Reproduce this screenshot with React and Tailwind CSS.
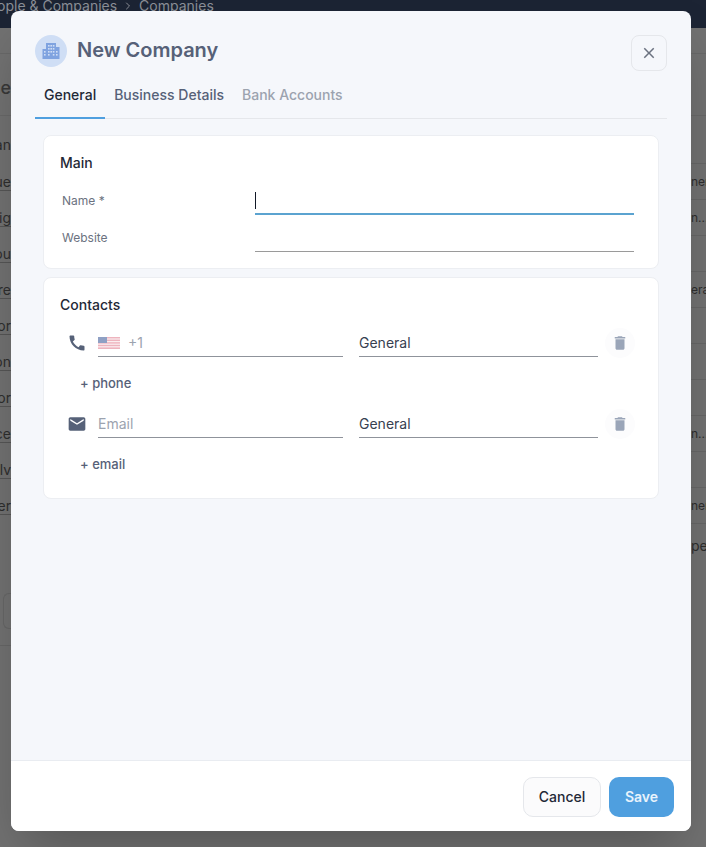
import { MdCall, MdEmail, MdDelete, MdClose } from "react-icons/md";
import { ChevronRight } from "lucide-react";

const leftBits = ["an", "ue", "ig", "ou", "re", "or", "on", "or", "ce", "lv", "er"];
const rightBits = ["", "ner", "n...", "", "eral", "", "", "", "n...", "", "ner"];

function BuildingIcon() {
  return (
    <svg width="18" height="18" viewBox="0 0 18 18">
      <path fill="#7fa3e0" d="M4 1h10v4h3.5v12H.5V7H4z" />
      <g fill="#cfdef5">
        <rect x="6" y="3" width="1.6" height="1.6" />
        <rect x="8.4" y="3" width="1.6" height="1.6" />
        <rect x="10.8" y="3" width="1.6" height="1.6" />
        <rect x="6" y="6" width="1.6" height="1.6" />
        <rect x="8.4" y="6" width="1.6" height="1.6" />
        <rect x="10.8" y="6" width="1.6" height="1.6" />
        <rect x="2" y="9" width="1.6" height="1.6" />
        <rect x="6" y="9" width="1.6" height="1.6" />
        <rect x="8.4" y="9" width="1.6" height="1.6" />
        <rect x="10.8" y="9" width="1.6" height="1.6" />
        <rect x="14" y="9" width="1.6" height="1.6" />
        <rect x="2" y="12" width="1.6" height="1.6" />
        <rect x="6" y="12" width="1.6" height="1.6" />
        <rect x="10.8" y="12" width="1.6" height="1.6" />
        <rect x="14" y="12" width="1.6" height="1.6" />
      </g>
    </svg>
  );
}

function UsFlag() {
  return (
    <svg width="22" height="12" viewBox="0 0 22 12" className="shrink-0">
      <rect width="22" height="12" fill="#fbeef0" />
      <rect y="0" width="22" height="1.4" fill="#eeb4be" />
      <rect y="2.6" width="22" height="1.4" fill="#eeb4be" />
      <rect y="5.2" width="22" height="1.4" fill="#eeb4be" />
      <rect y="7.8" width="22" height="1.4" fill="#eeb4be" />
      <rect y="10.4" width="22" height="1.6" fill="#eeb4be" />
      <rect width="9" height="6" fill="#8fa0c4" />
    </svg>
  );
}

function Field({ label, focused }) {
  return (
    <div className="flex items-end h-[37px]">
      <div className="w-[195px] pl-[2px] pb-[6px] text-xs text-[#6b7280]">{label}</div>
      <div
        className={
          focused
            ? "w-[379px] h-[28px] border-b-2 border-[#5ba3d0] flex items-center"
            : "w-[379px] h-[28px] border-b border-[#9a9a9a]"
        }
      >
        {focused && <div className="w-px h-[17px] bg-[#111827]" />}
      </div>
    </div>
  );
}

function ContactRow({ icon, children }) {
  return (
    <div className="flex items-center h-[30px]">
      <div className="w-[38px] pl-[7px] text-[#566178]">{icon}</div>
      <div className="w-[245px] h-[28px] border-b border-[#8f939b] flex items-center gap-2">
        {children}
      </div>
      <div className="w-[239px] ml-4 h-[28px] border-b border-[#8f939b] flex items-center text-sm text-[#374151]">
        General
      </div>
      <div className="ml-[7px] w-[30px] h-[30px] rounded-full bg-[#fcfcfd] flex items-center justify-center text-[#9aa5b8]">
        <MdDelete size={18} />
      </div>
    </div>
  );
}

function AddLink({ children }) {
  return <div className="pl-5 h-[51px] flex items-center text-[13px] font-medium text-[#566178]">{children}</div>;
}

export default function App() {
  return (
    <div className="relative w-[706px] h-[847px] overflow-hidden bg-[#717171] font-['Inter',sans-serif]">
      {/* page behind the dialog */}
      <div className="h-[28px] bg-[#1c2434] overflow-hidden">
        <div className="flex items-center gap-[5px] -mt-[4px] -ml-[20px] text-sm text-[#8b8f97]">
          <span>People & Companies</span>
          <ChevronRight size={12} />
          <span>Companies</span>
        </div>
      </div>
      <div className="flex justify-between text-sm text-[#2e2e2e]">
        <div className="w-[11px] overflow-hidden">
          <div className="h-[26px] border-b border-[#686868]" />
          <div className="h-[62px] border-b border-[#686868] pt-[24px] flex justify-end text-lg font-medium leading-5 text-[#383838] whitespace-nowrap">
            ie
          </div>
          <div className="h-[10px]" />
          {leftBits.map((bit, i) => (
            <div
              key={i}
              className={
                i === 0
                  ? "h-[38px] flex items-center justify-end whitespace-nowrap"
                  : "h-[36px] flex items-center justify-end whitespace-nowrap"
              }
            >
              <span className={i === 0 ? "leading-4" : "leading-4 border-b border-[#555]"}>{bit}</span>
            </div>
          ))}
          <div className="mt-[69px] ml-[3px] h-[36px] border border-r-0 border-[#666] rounded-l-md" />
          <div className="mt-[16px] h-px bg-[#666]" />
        </div>
        <div className="w-[15px] overflow-hidden text-xs">
          <div className="h-[26px] border-b border-[#686868]" />
          <div className="h-[62px] border-b border-[#686868]" />
          <div className="h-[10px]" />
          {rightBits.map((bit, i) => (
            <div
              key={i}
              className={
                i === 0
                  ? "h-[38px] border-b border-[#666] flex items-center whitespace-nowrap"
                  : "h-[36px] border-b border-[#666] flex items-center whitespace-nowrap"
              }
            >
              {bit}
            </div>
          ))}
          <div className="h-[44px] flex items-center text-sm">pe</div>
        </div>
      </div>

      {/* dialog */}
      <div className="absolute left-[11px] top-[11px] w-[680px] h-[820px] flex flex-col rounded-lg overflow-hidden bg-[#f5f7fb] shadow-2xl">
        <div className="flex-1 px-6 pt-6">
          <div className="flex justify-between items-start h-[36px]">
            <div className="flex items-center gap-[10px]">
              <div className="w-8 h-8 rounded-full bg-[#cfdef5] flex items-center justify-center">
                <BuildingIcon />
              </div>
              <h1 className="text-xl font-semibold text-[#566178] -mt-[2px]">New Company</h1>
            </div>
            <button className="w-9 h-9 rounded-lg border border-[#e5e7eb] flex items-center justify-center text-[#6b7280]">
              <MdClose size={18} />
            </button>
          </div>

          <div className="flex h-[48px] border-b border-[#e5e7eb] text-sm font-medium">
            <div className="px-[9px] pt-[14px] h-[48px] border-b-2 border-[#4f9fdf] text-[#1f2937]">General</div>
            <div className="px-[9px] pt-[14px] text-[#566178]">Business Details</div>
            <div className="px-[9px] pt-[14px] text-[#9ca3af]">Bank Accounts</div>
          </div>

          <div className="mx-2 mt-4 flex flex-col gap-2">
            <section className="h-[134px] bg-white rounded-lg border border-[#eceef2] pl-4 pt-[18px]">
              <h2 className="text-sm font-medium text-[#1f2937] leading-[18px]">Main</h2>
              <div className="mt-[6px]">
                <Field label="Name *" focused />
                <Field label="Website" />
              </div>
            </section>

            <section className="h-[222px] bg-white rounded-lg border border-[#eceef2] pl-4 pt-[18px]">
              <h2 className="text-sm font-medium text-[#1f2937] leading-[18px]">Contacts</h2>
              <div className="mt-[14px]">
                <ContactRow icon={<MdCall size={20} />}>
                  <UsFlag />
                  <span className="text-sm text-[#9ca3af]">+1</span>
                </ContactRow>
                <AddLink>+ phone</AddLink>
                <ContactRow icon={<MdEmail size={20} />}>
                  <span className="text-sm text-[#9ca3af]">Email</span>
                </ContactRow>
                <AddLink>+ email</AddLink>
              </div>
            </section>
          </div>
        </div>

        <div className="h-[71px] bg-white border-t border-[#e9ecf1] flex justify-end items-start gap-2 pt-4 pr-[17px]">
          <button className="w-[78px] h-10 rounded-[10px] border border-[#e5e7eb] bg-[#fbfbfc] text-sm font-medium text-[#1f2937]">
            Cancel
          </button>
          <button className="w-[65px] h-10 rounded-[10px] bg-[#4f9fdf] text-sm font-semibold text-[#e8f3fc]">
            Save
          </button>
        </div>
      </div>
    </div>
  );
}
